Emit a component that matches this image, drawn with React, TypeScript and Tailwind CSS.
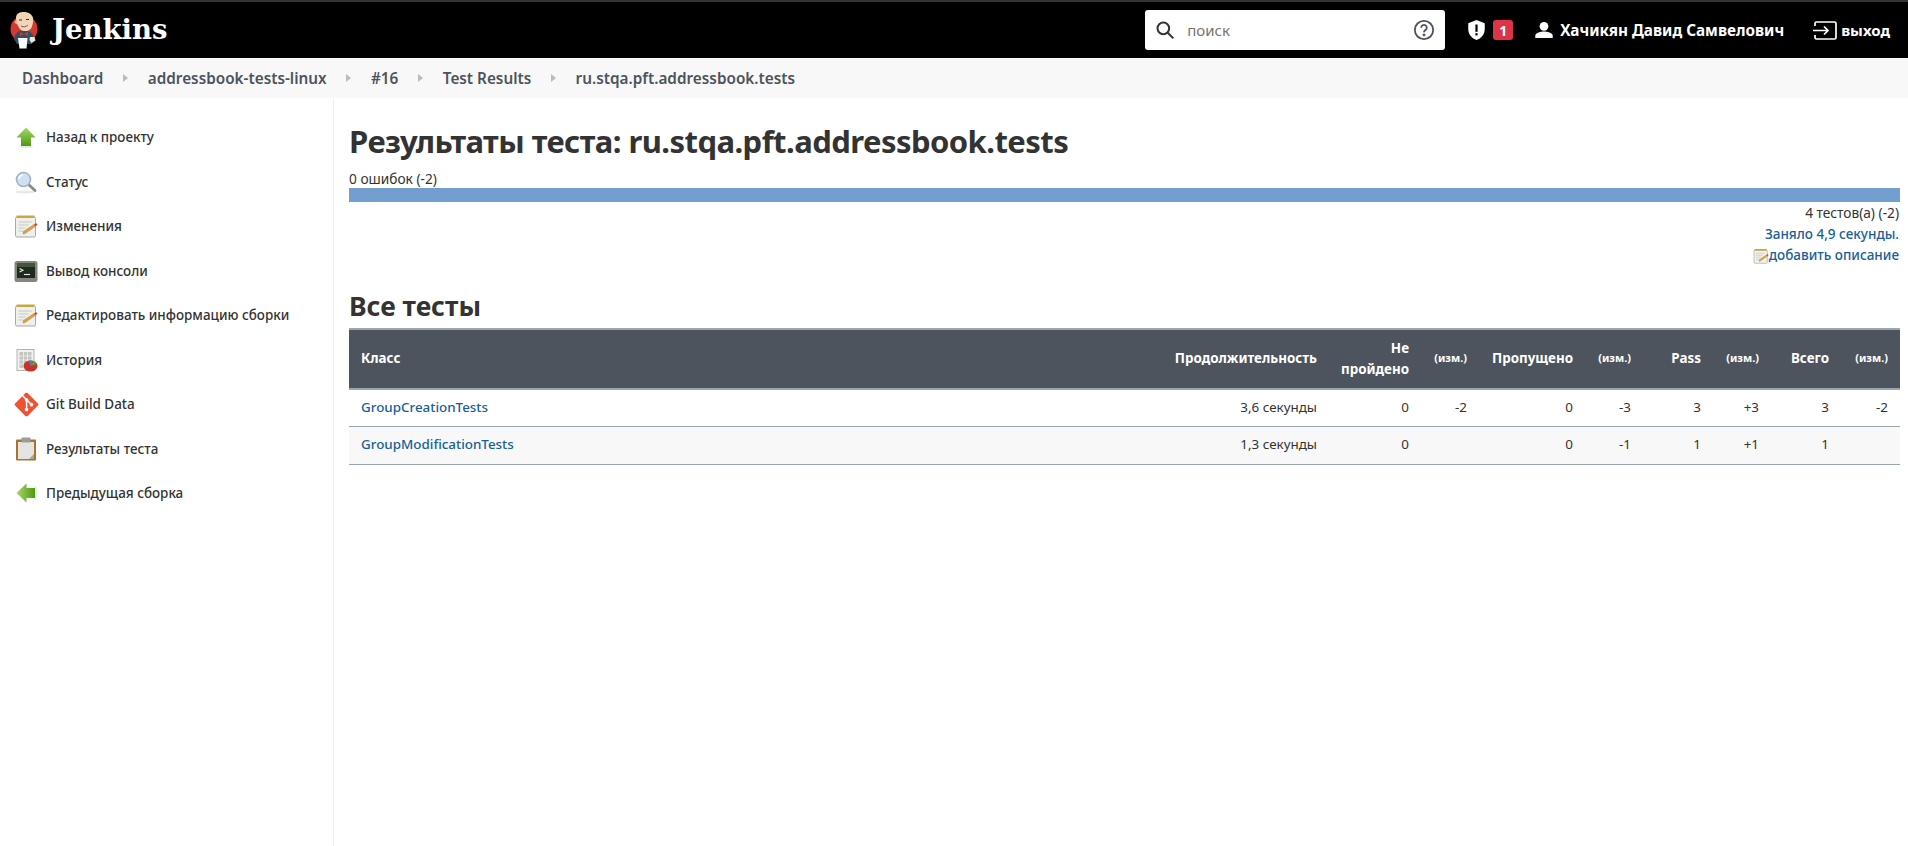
import type { ReactNode } from "react";

function ArrowIcon({ left = false }: { left?: boolean }) {
  const id = left ? "arrowLeft" : "arrowUp";
  return (
    <svg width="24" height="24" viewBox="0 0 24 24" className={left ? "-rotate-90" : ""}>
      <defs>
        <linearGradient id={id} x1="0" y1="0" x2="0" y2="1">
          <stop offset="0" stopColor="#a6d86a" />
          <stop offset="1" stopColor="#4f9a0e" />
        </linearGradient>
      </defs>
      <ellipse cx="12" cy="21.5" rx="7" ry="1.5" fill="#e6e6e6" />
      <path d="M12 2.500 21.500 12.500H17V21H7v-8.500H2.500z" fill={`url(#${id})`} />
    </svg>
  );
}

function SearchIcon() {
  return (
    <svg width="24" height="24" viewBox="0 0 24 24">
      <ellipse cx="11" cy="22" rx="10" ry="1.500" fill="#e8e8e8" />
      <path d="M14.500 14.500 21 20.500" stroke="#8d8d8d" strokeWidth="3" strokeLinecap="round" />
      <circle cx="9.500" cy="9.500" r="7" fill="#cfe0f5" stroke="#a5b3c4" strokeWidth="1.600" />
      <path d="M5 9a4.500 4.500 0 0 1 4-4" stroke="#fff" strokeWidth="1.600" fill="none" />
    </svg>
  );
}

function NotepadIcon({ size = 24 }: { size?: number }) {
  return (
    <svg width={size} height={size} viewBox="0 0 24 24">
      <rect x="1.500" y="3" width="20" height="20" rx="1.500" fill="#efefeb" stroke="#a9a9a3" />
      <rect x="2.500" y="1.500" width="18" height="2.500" fill="#c9a93f" />
      <path d="M4.500 8h13M4.500 11h10M4.500 14h7M4.500 17h5" stroke="#c8c8c4" strokeWidth="1" />
      <path d="M9.500 17.500 20 10.500l1.500 1.800L11 19.500l-2 .5z" fill="#e3a23c" stroke="#8a6a2a" strokeWidth=".4" />
      <path d="M20 10.500l1.500 1.800 2-1.500-1.500-1.800z" fill="#d2452d" />
    </svg>
  );
}

function ConsoleIcon() {
  return (
    <svg width="24" height="24" viewBox="0 0 24 24">
      <rect x="0.500" y="2" width="23" height="21" rx="2.500" fill="#85877f" />
      <rect x="3" y="4" width="18" height="15" fill="#1f2b1e" />
      <rect x="3" y="4" width="18" height="4" fill="#46553f" />
      <path d="M5.500 9.500l3.500 1.800-3.500 1.800" stroke="#e8f0e0" strokeWidth="1.100" fill="none" />
      <path d="M10 15.500h6" stroke="#e8f0e0" strokeWidth="1.100" />
    </svg>
  );
}

function HistoryIcon() {
  return (
    <svg width="24" height="24" viewBox="0 0 24 24">
      <rect x="3" y="1.500" width="17" height="21" fill="#f1f1ef" stroke="#b3b3b0" />
      <path d="M5.500 4h12v16h-12z" fill="#c4c4c0" />
      <path d="M5.500 8h12M5.500 12h12M5.500 16h12M9.500 4v16M13.500 4v16" stroke="#f1f1ef" strokeWidth=".8" />
      <ellipse cx="16.500" cy="18" rx="7" ry="5.500" fill="#c8322b" />
      <path d="M16.500 18l-1.500-5.400a7 5.500 0 0 1 4 .2z" fill="#3f86c8" />
      <path d="M16.500 18l3-5a7 5.500 0 0 1 3 3z" fill="#57a63a" />
    </svg>
  );
}

function GitIcon() {
  return (
    <svg width="25" height="25" viewBox="0 0 97 97">
      <path
        d="M92.710 44.408 52.591 4.291c-2.310-2.311-6.057-2.311-8.369 0l-8.330 8.332L46.459 23.190c2.456-.830 5.272-.273 7.229 1.685 1.969 1.970 2.520 4.810 1.670 7.275l10.186 10.185c2.465-.850 5.307-.300 7.275 1.671 2.750 2.750 2.750 7.206 0 9.958-2.752 2.751-7.208 2.751-9.961 0-2.068-2.070-2.580-5.110-1.531-7.658l-9.500-9.499v24.997c.670.332 1.303.774 1.861 1.332 2.750 2.750 2.750 7.206 0 9.959-2.750 2.749-7.209 2.749-9.957 0-2.750-2.754-2.750-7.210 0-9.959.680-.679 1.467-1.193 2.307-1.537V36.369c-.840-.344-1.625-.853-2.307-1.537-2.083-2.082-2.584-5.140-1.516-7.698L31.798 16.715 4.288 44.222c-2.311 2.313-2.311 6.060 0 8.371l40.121 40.118c2.310 2.311 6.056 2.311 8.369 0L92.710 52.779c2.311-2.311 2.311-6.060 0-8.371z"
        fill="#f05133"
      />
    </svg>
  );
}

function ClipboardIcon() {
  return (
    <svg width="24" height="24" viewBox="0 0 24 24">
      <rect x="2" y="2.500" width="20" height="21" rx="1" fill="#a8742c" />
      <rect x="4" y="5" width="16" height="17" fill="#e4e4e1" />
      <path d="M15 22l5-5v5z" fill="#a3a3a0" />
      <rect x="7.500" y="0.500" width="9" height="5" rx="1" fill="#9a9c98" />
    </svg>
  );
}

function JenkinsLogo() {
  return (
    <svg width="28" height="37" viewBox="0 0 28 37">
      <circle cx="14" cy="17" r="13.500" fill="#d33833" />
      <path d="M4 27c.5-5 5-9 9-9s10 2 11 8l-2 6H7z" fill="#335061" />
      <path d="M6 6c0-5 4-6 8-6s8 2 9 6c.5 4-.5 8-2 10.500-2 3-8 3.500-10.500 1C8 15 6 10 6 6z" fill="#f0d6b7" />
      <path d="M6.500 9c-1-1-2.500 0-1.500 2 .5 1 1.500 1.500 2 1z" fill="#e8bf9a" />
      <path d="M9 8h3M16 7.500h3" stroke="#333" strokeWidth="1.200" />
      <path d="M11 14c2.500 1.500 5 1 7-1" stroke="#8a5a44" strokeWidth="1" fill="none" />
      <path d="M10 20l4 2-4 2zM18 20l-4 2 4 2z" fill="#d33833" />
      <path d="M8 26h9.500l-1 10.500H9.500z" fill="#fff" />
      <path d="M20 25h4.500l1 3.500-4 2.500-2-3z" fill="#e8e8e0" />
    </svg>
  );
}

const sidebarItems: { label: string; icon: ReactNode }[] = [
  { label: "Назад к проекту", icon: <ArrowIcon /> },
  { label: "Статус", icon: <SearchIcon /> },
  { label: "Изменения", icon: <NotepadIcon /> },
  { label: "Вывод консоли", icon: <ConsoleIcon /> },
  { label: "Редактировать информацию сборки", icon: <NotepadIcon /> },
  { label: "История", icon: <HistoryIcon /> },
  { label: "Git Build Data", icon: <GitIcon /> },
  { label: "Результаты теста", icon: <ClipboardIcon /> },
  { label: "Предыдущая сборка", icon: <ArrowIcon left /> },
];

const crumbs = [
  "Dashboard",
  "addressbook-tests-linux",
  "#16",
  "Test Results",
  "ru.stqa.pft.addressbook.tests",
];

const rows = [
  { name: "GroupCreationTests", time: "3,6 секунды", cells: ["0", "-2", "0", "-3", "3", "+3", "3", "-2"] },
  { name: "GroupModificationTests", time: "1,3 секунды", cells: ["0", "", "0", "-1", "1", "+1", "1", ""] },
];

const colWidths = ["w-[92px]", "w-[58px]", "w-[106px]", "w-[58px]", "w-[70px]", "w-[58px]", "w-[70px]", "w-[59px]"];
const diffCols = [false, true, false, true, false, true, false, true];
const headers = ["Не пройдено", "(изм.)", "Пропущено", "(изм.)", "Pass", "(изм.)", "Всего", "(изм.)"];

export default function App() {
  return (
    <div className="h-[846px] overflow-hidden bg-white font-['Noto_Sans','Open_Sans',sans-serif] text-[#333]">
      <header className="flex h-[58px] items-center border-t-2 border-[#333] bg-black pr-[18px] text-white">
        <div className="ml-[10px] flex items-center">
          <JenkinsLogo />
          <span className="ml-[14px] font-['DejaVu_Serif',serif] text-[27.500px] font-bold leading-none">Jenkins</span>
        </div>
        <div className="ml-auto flex h-10 w-[300px] items-center rounded-[3px] bg-white pl-[10px] pr-[10px]">
          <svg width="20" height="20" viewBox="0 0 24 24" fill="none" stroke="#333" strokeWidth="2.400">
            <circle cx="10" cy="10" r="7" />
            <path d="m15 15 7 7" />
          </svg>
          <span className="ml-[12px] flex-1 text-[15px] text-[#757575]">поиск</span>
          <svg width="22" height="22" viewBox="0 0 24 24" fill="none" stroke="#4d545d" strokeWidth="2">
            <circle cx="12" cy="12" r="10" />
            <path d="M9 9.500a3 3 0 1 1 4.500 2.600c-1 .6-1.500 1.200-1.500 2.400" />
            <circle cx="12" cy="17.500" r=".6" fill="#4d545d" />
          </svg>
        </div>
        <svg className="ml-[22px]" width="19" height="22" viewBox="0 0 20 24">
          <path d="M10 1 19 4.500V11c0 6-4 10.500-9 12C5 21.500 1 17 1 11V4.500z" fill="#fff" />
          <rect x="8.800" y="6" width="2.400" height="8" fill="#000" />
          <rect x="8.800" y="15.500" width="2.400" height="2.400" fill="#000" />
        </svg>
        <span className="ml-[7px] flex h-5 w-5 items-center justify-center rounded-[3px] bg-[#dc3545] text-[14px] font-bold">1</span>
        <svg className="ml-[22px]" width="18" height="16" viewBox="0 0 24 22" fill="#fff">
          <circle cx="12" cy="6" r="6" />
          <path d="M0 22v-3c0-4.500 8-6 12-6s12 1.500 12 6v3z" />
        </svg>
        <span className="ml-[7px] text-[15.300px] font-bold">Хачикян Давид Самвелович</span>
        <svg className="ml-[29px]" width="24" height="19" viewBox="0 0 24 19" fill="none" stroke="#fff" strokeWidth="1.700">
          <path d="M2 5V2.500A1.500 1.500 0 0 1 3.500 1h18A1.500 1.500 0 0 1 23 2.500v14a1.500 1.500 0 0 1-1.500 1.500h-18A1.500 1.500 0 0 1 2 16.500V14" />
          <path d="M0 9.500h15M11 5.500l4 4-4 4" />
        </svg>
        <span className="ml-[4px] text-[15px] font-bold">выход</span>
      </header>

      <nav className="flex h-10 items-center bg-[#f8f8f8] pl-[22px] text-[15.300px] font-semibold text-[#4d545d]">
        {crumbs.map((crumb, i) => (
          <div key={crumb} className="flex items-center">
            {i > 0 && <span className="mx-[19.700px] h-0 w-0 border-y-[4px] border-l-[5px] border-y-transparent border-l-[#bbb]" />}
            <span>{crumb}</span>
          </div>
        ))}
      </nav>

      <div className="flex h-[748px]">
        <aside className="w-[334px] shrink-0 border-r border-[#f0f0f0] pt-[17px]">
          {sidebarItems.map((item) => (
            <div key={item.label} className="flex h-[44.500px] items-center pl-[14px] text-[13.450px] font-medium text-[#333]">
              <span className="flex w-[32px] shrink-0">{item.icon}</span>
              {item.label}
            </div>
          ))}
        </aside>

        <main className="min-w-0 flex-1 pl-[15px] pr-2">
          <h1 className="mt-[21px] text-[31px] font-bold leading-[44px] tracking-[-0.550px]">Результаты теста: ru.stqa.pft.addressbook.tests</h1>
          <div className="mt-[7px] text-[13.700px] leading-[18px]">0 ошибок (-2)</div>
          <div className="h-[14px] bg-[#729fcf]" />
          <div className="pr-px text-right text-[13.700px] leading-[21.500px]">
            <div>4 тестов(а) (-2)</div>
            <div className="text-[13.500px] font-medium text-[#17609a]">Заняло 4,9 секунды.</div>
            <div className="flex items-center justify-end text-[13.500px] font-medium text-[#17609a]">
              <NotepadIcon size={16} />
              добавить описание
            </div>
          </div>
          <h2 className="mt-[21px] text-[26.500px] font-bold leading-[36px]">Все тесты</h2>
          <table className="mt-[4px] w-full table-fixed border-collapse text-[13.400px]">
            <colgroup>
              <col />
              <col className="w-[198px]" />
              {colWidths.map((w, i) => (
                <col key={i} className={w} />
              ))}
            </colgroup>
            <thead>
              <tr className="h-[60px] border-y-2 border-[#9ba7af] bg-[#4d545d] text-white">
                <th className="px-3 text-left font-bold">Класс</th>
                <th className="px-3 text-right font-bold">Продолжительность</th>
                {headers.map((h, i) => (
                  <th key={i} className={`px-3 text-right font-bold ${diffCols[i] ? "text-[11px]" : ""}`}>
                    {h}
                  </th>
                ))}
              </tr>
            </thead>
            <tbody>
              {rows.map((row, r) => (
                <tr key={row.name} className={`h-[38px] border-b border-[#9ba7af] ${r % 2 ? "bg-[#f8f8f8]" : "bg-white"}`}>
                  <td className="px-3 pb-[2px] font-medium text-[#17609a]">{row.name}</td>
                  <td className="px-3 pb-[2px] text-right">{row.time}</td>
                  {row.cells.map((c, i) => (
                    <td key={i} className="px-3 pb-[2px] text-right">
                      {c}
                    </td>
                  ))}
                </tr>
              ))}
            </tbody>
          </table>
        </main>
      </div>
    </div>
  );
}
